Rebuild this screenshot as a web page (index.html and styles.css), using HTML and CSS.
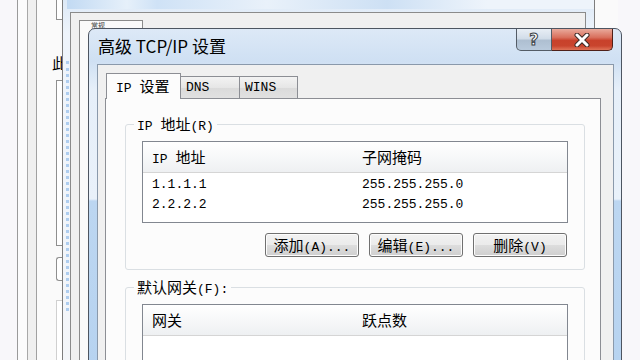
FILE: index.html
```html
<html lang="zh-CN"><head>
    <meta charset="UTF-8">
    <title>高级 TCP/IP 设置</title>
    <link rel="stylesheet" href="styles.css">
</head>
<body>
    <div id="desk">
        <!-- 뒤에 깔린 창들 -->
        <div class="win_a">
            <div class="win_a_in">
                <div class="edit e1"></div>
                <div class="cut">此</div>
                <div class="edit e2"></div>
                <div class="edit e3"></div>
                <div class="edit e4"></div>
            </div>
        </div>
        <div class="win_b">
            <div class="win_b_cap"></div>
            <div class="win_b_client">
                <div class="win_b_tab"><div class="peek">常规</div></div>
            </div>
        </div>

        <div class="dialog">
            <div class="titlebar">
                <div class="title">高级 TCP/IP 设置</div>
                <div class="capbtns">
                    <div class="cb_help"><span>?</span></div>
                    <div class="cb_close">
                        <svg width="20" height="14" viewBox="0 0 20 14">
                            <path d="M5 2 L15 12 M15 2 L5 12" stroke="#3c2a26" stroke-width="5" stroke-linecap="round"/>
                            <path d="M5 2 L15 12 M15 2 L5 12" stroke="#ffffff" stroke-width="3" stroke-linecap="round"/>
                        </svg>
                    </div>
                </div>
            </div>

            <div class="client">
                <div class="tabs">
                    <div class="tab tab_on"><span class="lt">IP </span>设置</div>
                    <div class="tab"><span class="lt">DNS</span></div>
                    <div class="tab tab_w"><span class="lt">WINS</span></div>
                </div>
                <div class="page">
                    <fieldset class="group">
                        <legend><span class="lt">IP </span>地址<span class="lt">(R)</span></legend>
                        <div class="list">
                            <div class="lhead">
                                <div class="col1"><span class="lt">IP </span>地址</div>
                                <div class="col2">子网掩码</div>
                            </div>
                            <div class="lrow lt">
                                <div class="col1">1.1.1.1</div>
                                <div class="col2">255.255.255.0</div>
                            </div>
                            <div class="lrow lt">
                                <div class="col1">2.2.2.2</div>
                                <div class="col2">255.255.255.0</div>
                            </div>
                        </div>
                        <div class="btns">
                            <div class="btn">添加<span class="lt">(A)...</span></div>
                            <div class="btn">编辑<span class="lt">(E)...</span></div>
                            <div class="btn">删除<span class="lt">(V)</span></div>
                        </div>
                    </fieldset>

                    <fieldset class="group group2">
                        <legend>默认网关<span class="lt">(F):</span></legend>
                        <div class="list">
                            <div class="lhead">
                                <div class="col1">网关</div>
                                <div class="col2">跃点数</div>
                            </div>
                        </div>
                    </fieldset>
                </div>
            </div>
        </div>
    </div>
</body></html>
```

FILE: styles.css
```css
/* Win7 다이얼로그 흉내 */
body {
    margin: 0;
    font-family: "Noto Sans CJK SC", sans-serif;
    font-size: 15px;
    color: #000;
}
#desk {
    position: relative;
    width: 640px;
    height: 360px;
    overflow: hidden;
    background: #f8f7fa;
}
.lt {
    font-family: "Liberation Mono", monospace;
    font-size: 13px;
}

/* ---- 뒤쪽 창 A ---- */
.win_a {
    position: absolute;
    left: 17px;
    top: -4px;
    width: 600px;
    height: 380px;
    border-left: 1px solid #9a9a9a;
    background: #fbfbfc;
}
.win_a_in {
    position: relative;
    margin-left: 9px;
    height: 100%;
    border-left: 1px solid #a8a8a8;
    background: linear-gradient(to right, #efefef 0, #efefef 8px, #a0a0a0 8px, #a0a0a0 9px, #fafafa 9px);
}
.edit {
    position: absolute;
    left: 28px;
    width: 10px;
    border: 1px solid #8f8f8f;
    border-right: none;
    background: #fff;
}
.e1 { top: -2px; height: 24px; }
.e2 { top: 84px; height: 164px; }
.e3 { top: 261px; height: 22px; border-radius: 3px 0 0 3px; }
.e4 { top: 304px; height: 80px; border-color: #d0d0d0; }
.cut {
    position: absolute;
    left: 24px;
    top: 58px;
    font-size: 15px;
    line-height: 18px;
}

/* ---- 뒤쪽 창 B ---- */
.win_b {
    position: absolute;
    left: 62px;
    top: -8px;
    width: 531px;
    height: 380px;
    border: 1px solid #7d7d7d;
    background: linear-gradient(to bottom, #d9e7f6, #eef4fb 40px, #f4f6f9);
}
.win_b_cap {
    height: 16px;
    margin-left: 4px;
    background: linear-gradient(to right, #c2daf3 0, #e6f0fa 60px, #cfe2f6 90px, #e9f1fa 200px, #cde0f4 320px, #eef4fb 420px);
}
.win_b_client {
    margin: 3px 8px 0 7px;
    height: 360px;
    border-top: 1px solid #8b8b8b;
    border-left: 1px solid #8b8b8b;
    border-right: 1px solid #8b8b8b;
    background: #f0f0f0;
    padding: 7px 0 0 8px;
    position: relative;
}
.win_b_client::before {
    content: "";
    position: absolute;
    left: -5px;
    top: 48px;
    height: 250px;
    border-left: 3px dotted #aecdef;
}
.win_b_tab {
    width: 64px;
    height: 360px;
    border-top: 1px solid #8b8b8b;
    border-left: 1px solid #8b8b8b;
    border-right: 1px solid #8b8b8b;
    background: #fafafa;
    padding: 1px 0 0 11px;
    box-sizing: border-box;
}
/* 제목표시줄에 거의 가려지는 탭 글자 */
.peek {
    font-size: 7px;
    line-height: 7px;
    color: #444;
}

/* ---- 메인 다이얼로그 ---- */
.dialog {
    position: absolute;
    left: 88px;
    top: 28px;
    width: 532px;
    height: 340px;
    border: 1px solid #4d5561;
    border-radius: 7px 7px 0 0;
    background: linear-gradient(to bottom, #dde9f7 0, #cfe0f3 32px, #e6eff9 60px, #e9f1fa 170px, #bcd6f1 172px, #b7d3f0 100%);
}
.titlebar {
    display: flex;
    justify-content: space-between;
    height: 35px;
}
.title {
    padding: 7px 0 0 9px;
    font-size: 17px;
    line-height: 20px;
}
.capbtns {
    display: flex;
    margin-right: 8px;
    height: 22px;
}
.cb_help {
    width: 34px;
    border: 1px solid #545c66;
    border-top: none;
    border-radius: 0 0 0 5px;
    background: linear-gradient(to bottom, #e8eef5 0, #d2dde9 45%, #aebfd1 55%, #b9cadc 100%);
    text-align: center;
}
.cb_help span {
    font-family: "DejaVu Sans", sans-serif;
    font-weight: bold;
    font-size: 16px;
    line-height: 21px;
    color: #fff;
    -webkit-text-stroke: 1px #3a3f46;
}
.cb_close {
    width: 60px;
    border: 1px solid #4f2019;
    border-top: none;
    border-left: none;
    border-radius: 0 0 5px 0;
    background: linear-gradient(to bottom, #e9aa9c 0, #d9705d 40%, #c8412b 55%, #c9442d 80%, #df7358 100%);
    display: flex;
    align-items: center;
    justify-content: center;
}

.client {
    margin: 0 7px 0 8px;
    height: 310px;
    border: 1px solid #8a99ab;
    border-bottom: none;
    background: #f0f0f0;
    padding: 8px 12px 0 7px;
}
.tabs {
    display: flex;
    align-items: flex-end;
    height: 25px;
    padding-left: 1px;
}
.tab {
    width: 60px;
    height: 22px;
    box-sizing: border-box;
    border: 1px solid #8c8e94;
    border-bottom: none;
    margin-left: -1px;
    background: linear-gradient(to bottom, #f3f3f3, #e6e6e6 50%, #dadada 51%, #e1e1e1);
    padding-left: 5px;
    line-height: 21px;
}
.tab_w {
    width: 59px;
}
.tab_on {
    width: 75px;
    height: 26px;
    margin-bottom: -1px;
    margin-left: 0;
    background: #fcfcfc;
    padding-left: 9px;
    line-height: 24px;
    position: relative;
}
.page {
    height: 300px;
    border: 1px solid #8c8e94;
    border-bottom: none;
    background: #fcfcfc;
    padding: 16px 15px 0 19px;
}

.group {
    margin: 0;
    border: 1px solid #dadfe3;
    border-radius: 3px;
    padding: 8px 16px 12px 16px;
}
.group legend {
    margin-left: -8px;
    padding: 0 3px;
    line-height: 18px;
    height: 18px;
}
.group2 {
    margin-top: 8px;
}

.list {
    height: 80px;
    border: 1px solid #828790;
    background: #fff;
}
.lhead {
    display: flex;
    height: 30px;
    border-bottom: 1px solid #d5d5d5;
    background: linear-gradient(to bottom, #ffffff, #f7f8f9 50%, #eef0f2);
    line-height: 30px;
}
.col1 {
    width: 201px;
    padding-left: 9px;
}
.col2 {
    padding-left: 9px;
}
.lrow {
    display: flex;
    height: 20px;
    line-height: 20px;
}
.lrow:nth-child(2) {
    margin-top: 2px;
}

.btns {
    display: flex;
    justify-content: flex-end;
    gap: 10px;
    margin-top: 10px;
    padding-right: 1px;
}
.btn {
    width: 92px;
    height: 22px;
    border: 1px solid #707070;
    border-radius: 3px;
    background: linear-gradient(to bottom, #f2f2f2, #ebebeb 50%, #dddddd 51%, #cfcfcf);
    box-shadow: inset 0 0 0 1px #fcfcfc;
    text-align: center;
    line-height: 22px;
}
```
